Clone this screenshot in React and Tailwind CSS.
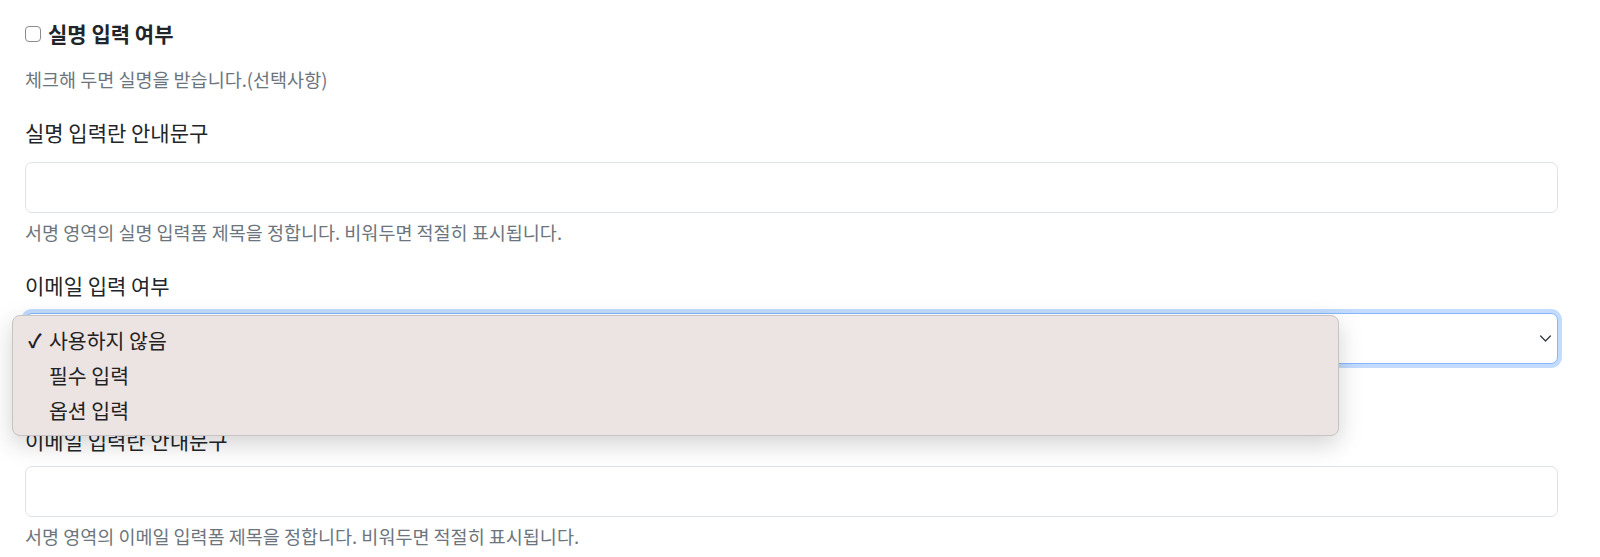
import { useState } from 'react';

const FONT = { fontFamily: '"Noto Sans CJK KR", "Noto Sans", sans-serif' };

const Field = ({ label, help, className = 'mb-[28px]', labelGap = 'mb-[12px]', children }) => (
  <div className={className}>
    <label className={`block text-[21px] leading-[28px] text-[#212529] ${labelGap}`}>{label}</label>
    {children}
    {help && <p className="mt-[6px] text-[18.5px] leading-[26px] text-[#6c757d]">{help}</p>}
  </div>
);

export default function App() {
  const [realName, setRealName] = useState(false);
  const options = ['사용하지 않음', '필수 입력', '옵션 입력'];
  const selected = 0;

  return (
    <div className="min-h-screen bg-white px-[25px] pt-[20px]" style={FONT}>
      {/* 실명 입력 여부 */}
      <div className="flex items-center gap-[7px] h-[28px]">
        <input
          type="checkbox"
          checked={realName}
          onChange={e => setRealName(e.target.checked)}
          className="appearance-none w-[16px] h-[16px] rounded-[4px] border border-[#8a8a8a] bg-white"
        />
        <span className="text-[21px] font-bold text-[#212529]">실명 입력 여부</span>
      </div>
      <p className="mt-[18px] mb-[26px] text-[18.5px] leading-[26px] text-[#6c757d]">
        체크해 두면 실명을 받습니다.(선택사항)
      </p>

      <Field
        label="실명 입력란 안내문구"
        labelGap="mb-[16px]"
        help="서명 영역의 실명 입력폼 제목을 정합니다. 비워두면 적절히 표시됩니다."
      >
        <input className="block w-[1533px] h-[51px] rounded-[7px] border border-[#dee2e6] bg-white px-3 outline-none" />
      </Field>

      <Field label="이메일 입력 여부" className="mb-[62px] -mt-[2px]" labelGap="mb-[14px]">
        <div className="relative w-[1533px] z-10">
          <div className="h-[51px] rounded-[7px] border border-[#86b7fe] bg-white shadow-[0_0_0_4px_rgba(13,110,253,0.25)] flex items-center justify-end pr-[5px]">
            <svg width="13" height="13" viewBox="0 0 16 16" fill="none">
              <path d="M2 5l6 6 6-6" stroke="#343a40" strokeWidth="1.6" strokeLinecap="round" strokeLinejoin="round" />
            </svg>
          </div>
          {/* native popup menu */}
          <div className="absolute left-[-13px] top-[2px] w-[1327px] h-[121px] rounded-[8px] border border-[#c9c4c4] bg-[#ece3e3] shadow-[0_8px_24px_rgba(0,0,0,0.18)] pt-[7px]">
            {options.map((opt, i) => (
              <div key={opt} className="flex items-center h-[35px] text-[20.5px] text-[#222]">
                <span className="w-[36px] pl-[15px] text-[19px] font-bold">{i === selected ? '✓' : ''}</span>
                <span>{opt}</span>
              </div>
            ))}
          </div>
        </div>
      </Field>

      <Field label="이메일 입력란 안내문구" help="서명 영역의 이메일 입력폼 제목을 정합니다. 비워두면 적절히 표시됩니다.">
        <input className="block w-[1533px] h-[51px] rounded-[7px] border border-[#dee2e6] bg-white px-3 outline-none" />
      </Field>
    </div>
  );
}
